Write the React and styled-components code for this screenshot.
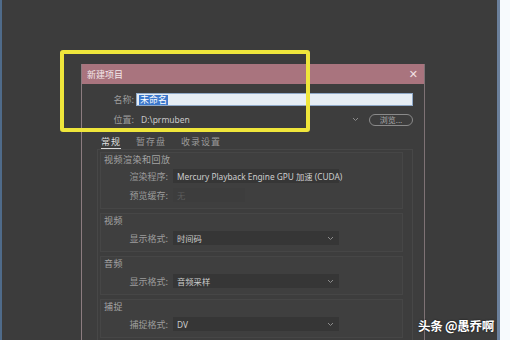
import React from "react";
import styled, { createGlobalStyle } from "styled-components";

const Global = createGlobalStyle`
  html, body { margin: 0; padding: 0; background: #3b3b3b; }
  body { font-family: "Noto Sans", "Noto Sans CJK SC", sans-serif; }
  * { box-sizing: border-box; }
`;

const Page = styled.div`
  position: relative;
  width: 510px;
  height: 340px;
  overflow: hidden;
  display: flex;
  background: #3b3b3b;
`;

const Edge = styled.div`
  flex: 0 0 ${(p) => p.$w}px;
  background: ${(p) => p.$c};
`;

const Desk = styled.div`
  flex: 1;
  padding: 64px 0 0 79px;
  background: #3c3c3c;
`;

const Dialog = styled.div`
  width: 344px;
  height: 290px;
  display: flex;
  flex-direction: column;
  border-left: 1px solid #8c7c80;
  border-right: 1px solid #7e7275;
  background: #3d3d3d;
`;

const TitleBar = styled.div`
  height: 20px;
  flex: 0 0 20px;
  background: #a9747e;
  display: flex;
  align-items: center;
  justify-content: space-between;
  padding: 0 6px 0 5px;
  color: #f4e8ea;
  font-family: "Noto Sans CJK SC", sans-serif;
  font-size: 9px;
`;

const Close = styled.span`
  font-family: "DejaVu Sans", sans-serif;
  font-size: 11px;
  color: #f1e0e3;
`;

const Body = styled.div`
  display: flex;
  flex-direction: column;
  padding-top: 9px;
`;

const FormRow = styled.div`
  display: flex;
  align-items: center;
  height: ${(p) => p.$h || 13}px;
  margin-top: ${(p) => p.$mt || 0}px;
  margin-bottom: ${(p) => p.$mb || 0}px;
`;

const Label = styled.div`
  width: ${(p) => p.$w}px;
  margin-right: ${(p) => p.$gap}px;
  text-align: right;
  color: #9c9c9c;
  font-family: "Noto Sans CJK SC", sans-serif;
  font-size: 9px;
  white-space: nowrap;
`;

const NameInput = styled.div`
  width: 277px;
  height: 13px;
  background: #e6edf4;
  border: 1px solid #8fa9c8;
  display: flex;
  align-items: center;
  padding-left: 2px;
`;

const Selected = styled.span`
  background: #3c78cc;
  color: #ffffff;
  font-family: "Noto Sans CJK SC", sans-serif;
  font-size: 9px;
  line-height: 10px;
  padding: 0 1px;
`;

const PathField = styled.div`
  width: 227px;
  height: 13px;
  display: flex;
  align-items: center;
  justify-content: space-between;
  padding: 0 4px 0 5px;
  color: #c8c8c8;
  font-size: 8.5px;
`;

const BrowseButton = styled.div`
  margin-left: 6px;
  width: 44px;
  height: 12px;
  border: 1px solid #8a8a8a;
  border-radius: 6px;
  display: flex;
  align-items: center;
  justify-content: center;
  color: #a8a8a8;
  font-family: "Noto Sans CJK SC", sans-serif;
  font-size: 8px;
`;

const Tabs = styled.div`
  display: flex;
  margin: 10px 0 0 19px;
  height: 13px;
`;

const Tab = styled.div`
  margin-right: ${(p) => p.$mr}px;
  color: ${(p) => (p.$active ? "#dcdcdc" : "#9a9a9a")};
  border-bottom: 1px solid ${(p) => (p.$active ? "#d8d8d8" : "transparent")};
  font-family: "Noto Sans CJK SC", sans-serif;
  font-size: 9px;
  line-height: 11px;
  letter-spacing: 1px;
`;

const Panel = styled.div`
  margin-left: 15px;
  width: 316px;
  height: 200px;
  border: 1px solid #474747;
  border-bottom: none;
  padding: 2px 9px 0 2px;
  display: flex;
  flex-direction: column;
  gap: 4px;
`;

const Group = styled.div`
  border: 1px solid #464646;
  background: #3f3f3f;
  padding: 1px 0 6px;
  display: flex;
  flex-direction: column;
  gap: ${(p) => p.$gap || 4}px;
`;

const GroupTitle = styled.div`
  height: 12px;
  line-height: 12px;
  padding-left: 3px;
  color: #a4a4a4;
  font-family: "Noto Sans CJK SC", sans-serif;
  font-size: 9px;
  letter-spacing: 0.5px;
`;

const Select = styled.div`
  width: ${(p) => p.$w || 166}px;
  height: 14px;
  background: ${(p) => (p.$disabled ? "#3d3d3d" : "#363636")};
  display: flex;
  align-items: center;
  justify-content: space-between;
  padding: 0 5px 0 4px;
  color: ${(p) => (p.$disabled ? "#5c5c5c" : "#cdcdcd")};
  font-family: "Noto Sans", "Noto Sans CJK SC", sans-serif;
  font-size: 8.3px;
  white-space: nowrap;
`;

const Watermark = styled.div`
  position: absolute;
  left: 418px;
  top: 316px;
  color: #ffffff;
  font-family: "Noto Sans CJK SC", sans-serif;
  font-weight: 700;
  font-size: 12.5px;
  letter-spacing: -0.3px;
  text-shadow: 0 0 2px rgba(0, 0, 0, 0.8);
  white-space: nowrap;
`;

const Highlight = styled.div`
  position: absolute;
  left: 60px;
  top: 50px;
  width: 250px;
  height: 82px;
  border: 4px solid #efe63b;
  border-radius: 3px;
`;

const Chevron = ({ color = "#8c8c8c" }) => (
  <svg width="7" height="5" viewBox="0 0 7 5">
    <polyline points="1,1 3.5,3.5 6,1" fill="none" stroke={color} strokeWidth="1" />
  </svg>
);

const SettingRow = ({ label, value, width, disabled, mt }) => (
  <FormRow $h={14} $mt={mt}>
    <Label $w={67} $gap={5}>{label}</Label>
    <Select $w={width} $disabled={disabled}>
      <span>{value}</span>
      {!disabled && <Chevron />}
    </Select>
  </FormRow>
);

export default function App() {
  return (
    <>
      <Global />
      <Page>
        <Edge $w={2} $c="#4f6b8a" />
        <Desk>
          <Dialog>
            <TitleBar>
              <span>新建项目</span>
              <Close>✕</Close>
            </TitleBar>
            <Body>
              <FormRow $mb={7}>
                <Label $w={52} $gap={2}>名称:</Label>
                <NameInput>
                  <Selected>未命名</Selected>
                </NameInput>
              </FormRow>
              <FormRow>
                <Label $w={52} $gap={2}>位置:</Label>
                <PathField>
                  <span>D:\prmuben</span>
                  <Chevron />
                </PathField>
                <BrowseButton>浏览...</BrowseButton>
              </FormRow>
              <Tabs>
                <Tab $active $mr={15}>常规</Tab>
                <Tab $mr={15}>暂存盘</Tab>
                <Tab $mr={0}>收录设置</Tab>
              </Tabs>
              <Panel>
                <Group $gap={3}>
                  <GroupTitle>视频渲染和回放</GroupTitle>
                  <SettingRow label="渲染程序:" value="Mercury Playback Engine GPU 加速 (CUDA)" />
                  <SettingRow label="预览缓存:" value="无" width={72} disabled mt={2} />
                </Group>
                <Group>
                  <GroupTitle>视频</GroupTitle>
                  <SettingRow label="显示格式:" value="时间码" />
                </Group>
                <Group>
                  <GroupTitle>音频</GroupTitle>
                  <SettingRow label="显示格式:" value="音频采样" />
                </Group>
                <Group>
                  <GroupTitle>捕捉</GroupTitle>
                  <SettingRow label="捕捉格式:" value="DV" />
                </Group>
              </Panel>
            </Body>
          </Dialog>
        </Desk>
        <Edge $w={3} $c="#6b809c" />
        <Edge $w={10} $c="#f7fafd" />
        <Highlight />
        <Watermark>头条 @愚乔啊</Watermark>
      </Page>
    </>
  );
}
